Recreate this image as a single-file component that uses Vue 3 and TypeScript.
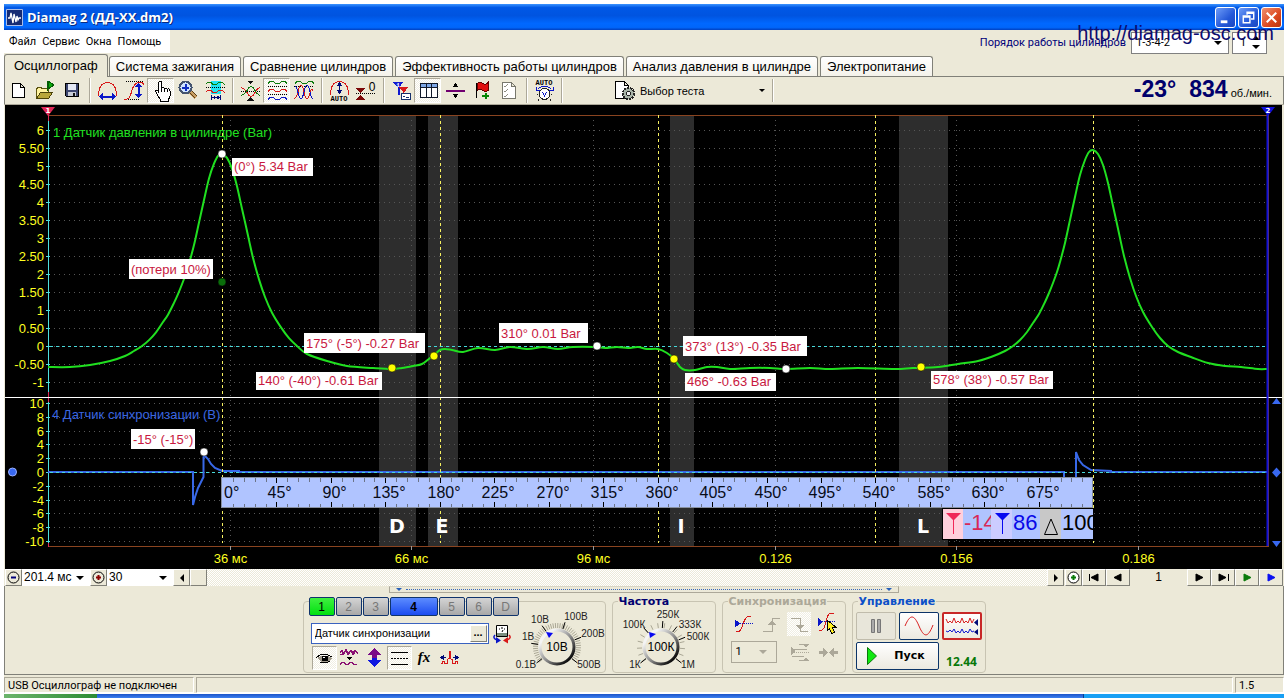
<script setup lang="ts">
import { ref } from 'vue'

type Shape = { d: string; s?: string; f?: string; w?: number; dash?: string }
type Glyph = { t: string; x: number; y: number; c?: string; size: number; thin?: boolean }
type Tool = { label: string; shapes: Shape[]; glyphs?: Glyph[]; on?: boolean }
type Pt = [number, number]

const RED = '#d81818'
const BLUE = '#0a16c8'
const GREEN = '#0b7a0b'
const dots = '1 1'

const tabs = [
  'Осциллограф',
  'Система зажигания',
  'Сравнение цилиндров',
  'Эффективность работы цилиндров',
  'Анализ давления в цилиндре',
  'Электропитание',
]
const activeTab = ref(0)

const toolGroups: Tool[][] = [
  [
    { label: 'Новый', shapes: [{ d: 'M6.5 4.5h8l4 4v10h-12zM14.5 4.5v4h4', s: '#000', f: '#fff' }] },
    {
      label: 'Открыть',
      shapes: [
        { d: 'M3.5 19.5v-10h1v-1h4v1h7v4', s: '#5d5410', f: '#fff3a0' },
        { d: 'M3.5 19.5l4-6h12l-4 6z', s: '#4a4208', f: '#b8a63c' },
        { d: 'M14.5 2v10', s: '#045c04' },
        { d: 'M15 2l6 4-6 4z', f: '#0da80d', s: '#045c04' },
      ],
    },
    {
      label: 'Сохранить',
      shapes: [
        { d: 'M5.5 4.5h13v13h-12l-1-1z', s: '#000', f: '#3c4670' },
        { d: 'M8 5h8v6h-8z', f: '#e4e8f4' },
        { d: 'M8 13h8v4h-8z', f: '#c8ccd8' },
        { d: 'M13 14h2v3h-2z', f: '#111' },
      ],
    },
  ],
  [
    {
      label: 'Растянуть по времени',
      shapes: [
        { d: 'M3.5 16.5v-3c1-6 4-10 9-10s8 4 9 10v3', s: RED },
        { d: 'M6 17.5h13', s: BLUE, w: 2 },
        { d: 'M4 17.5l4-4v8zM21 17.5l-4-4v8z', f: BLUE },
      ],
    },
    {
      label: 'Растянуть по амплитуде',
      shapes: [
        { d: 'M4 2.5h18M2 20.5h15', s: '#000', dash: dots },
        { d: 'M2 20.5c8 0 6-6 9-12 2-4 4-5 6-5h2c2 0 2 1 3 2', s: RED },
        { d: 'M16.5 6v11', s: BLUE, w: 2 },
        { d: 'M16.5 4l-4 4h8zM16.5 19l-4-4h8z', f: BLUE },
      ],
    },
    {
      label: 'Рука',
      on: true,
      shapes: [
        {
          d: 'M9.500 13.500v-9.500q0-1.500 1.500-1.500t1.500 1.500v5.500q.5-1 1.500-1t1.500 1.500q.5-1 1.500-1t1.500 1.500q.5-.7 1.500-.5t1 1.500v5q0 2-1.500 4v1.500h-8v-1.500q-2-2-3-5l-2-3q0-1.500 1-1.500t2 1.500z',
          s: '#000',
          f: '#fff',
        },
        { d: 'M12.500 9v4M15.500 10v3M18.500 11v2', s: '#000' },
      ],
    },
    {
      label: 'Лупа',
      shapes: [
        { d: 'M13 12l7 7', s: '#caa064', w: 4 },
        { d: 'M13 13l6 6M15 11l6 6', s: '#5a3c10' },
        { d: 'M9.500 2.500a6 6 0 1 0 .1 0z', s: '#44546e', f: '#cfe4ff', w: 2 },
        { d: 'M9.500 5v7M6 8.500h7', s: '#1030c0', w: 2 },
      ],
    },
    {
      label: 'Диапазон',
      shapes: [
        { d: 'M8 2h10v13h-10z', f: '#20e4f0' },
        { d: 'M3 4.500l2-1h3l2 2h3l3-2h3l3 2', s: GREEN },
        { d: 'M3 8.500h19', s: '#000', dash: dots },
        { d: 'M3 12.500l2-1h3l2 2h3l3-2h3l3 2', s: RED },
        { d: 'M8.500 16v5M17.500 16v5M9 18.500h8', s: '#000a78' },
        { d: 'M9 18.500l3-2v4zM17 18.500l-3-2v4z', f: '#000a78' },
      ],
    },
  ],
  [
    {
      label: 'Совместить',
      shapes: [
        { d: 'M3 12.500h19', s: '#000', dash: dots },
        { d: 'M3 8.500q4 1 6 5t4 4 4-4 5-5', s: RED },
        { d: 'M3 16.500q4-1 6-5t4-4 4 4 5 5', s: GREEN },
        { d: 'M9 1.500h7l-3.500 4zM9 21.500h7l-3.500-4z', f: '#111' },
      ],
    },
    {
      label: 'Разнести сигналы',
      on: true,
      shapes: [
        { d: 'M3 4.500l2-2h3l3 2h3l3-2h3l2 2', s: GREEN },
        { d: 'M3 7.500h19M3 15.500h19', s: '#000', dash: dots },
        { d: 'M3 12.500l2-2h3l3 2h3l3-2h3l2 2', s: RED },
        { d: 'M3 20.500l2-2h3l3 2h3l3-2h3l2 2', s: BLUE },
      ],
    },
    {
      label: 'Наложить сигналы',
      shapes: [
        { d: 'M3 4.500l2-2h3l3 2h3l3-2h3l2 2', s: GREEN },
        { d: 'M2 7.500h20', s: '#000', dash: dots },
        { d: 'M2 19.500c4 0 4-13 7-13s3 13 6 13 3-13 6-8', s: RED },
        { d: 'M3 7.500c3 0 3 12 6 12s3-13 6-13 3 13 6 13', s: BLUE },
      ],
    },
  ],
  [
    {
      label: 'Автомасштаб',
      shapes: [
        { d: 'M3.500 15.500v-3c1-6 4-10 9-10s8 4 9 10v3', s: RED },
        { d: 'M12.500 5v8', s: '#000a78' },
        { d: 'M12.500 3l-3 4h6zM12.500 15l-3-4h6z', f: '#000a78' },
      ],
      glyphs: [{ t: 'AUTO', x: 12, y: 22, size: 7 }],
    },
    {
      label: 'Установить ноль',
      shapes: [
        { d: 'M2 9h9l-4.500 5zM2 21h9l-4.500-5z', f: '#7c0808' },
        { d: 'M2 14.500h20', s: '#000', dash: dots },
      ],
      glyphs: [{ t: '0', x: 18, y: 12, size: 12, thin: true }],
    },
  ],
  [
    {
      label: 'Синхронизация',
      shapes: [
        { d: 'M3.500 2.500h11l-5 7z', f: '#1018d0' },
        { d: 'M9.500 7v9', s: '#1018d0', w: 2 },
        { d: 'M9 7.500h11l-5 6z', f: RED },
        { d: 'M14.500 12v6', s: RED },
        { d: 'M12.500 14.500h9v6h-9zM14 17.500h2M17 18.500h3', s: '#16306c', f: '#fff' },
      ],
      glyphs: [{ t: '1', x: 9, y: 8, c: '#fff', size: 6 }],
    },
    {
      label: 'Таблица',
      on: true,
      shapes: [
        { d: 'M4.500 4.500h17v14h-17z', s: '#101828', f: '#fff' },
        { d: 'M5 5h16v3h-16z', f: '#7da6e4' },
        { d: 'M4 8.500h18M10.500 5v14M15.500 5v14', s: '#101828' },
      ],
    },
    {
      label: 'Горизонтальная линия',
      shapes: [
        { d: 'M3 11.500h19', s: '#700070', w: 2 },
        { d: 'M12.500 4l3 4h-6zM12.500 19l3-4h-6z', f: '#000' },
      ],
    },
    {
      label: 'Добавить метку',
      shapes: [
        { d: 'M6.500 4v15', s: '#000' },
        { d: 'M7 4.500q3-2 6 0t5-1v8q-2 2-5 0t-6 0z', s: '#600', f: '#e01010' },
        { d: 'M12 17h7M15.500 14v6', s: '#068606', w: 2 },
      ],
    },
    {
      label: 'Отчёт',
      shapes: [
        { d: 'M5.500 3.500h9l4 4v12h-13zM14.500 3.500v4h4', s: '#77776c', f: '#fff' },
        { d: 'M7 7l1 1 3-3M7 12l1 1 3-3M7 17l1 1 3-3', s: '#8c8c80' },
      ],
    },
  ],
  [
    {
      label: 'Авто',
      shapes: [
        { d: 'M6 9.500q6-4 13 0M4 8v3h4M21 8v3h-4', s: BLUE },
        { d: 'M12.500 9.500a5.500 5.500 0 1 0 .1 0z', s: '#222', f: '#fff' },
        { d: 'M7 20l-1 2M18 20l1 2M6 15h-1M20 15h-1', s: '#222' },
        { d: 'M10.500 13l2 4 2-4', s: BLUE },
      ],
      glyphs: [{ t: 'AUTO', x: 12, y: 6, size: 7 }],
    },
  ],
]

/* One compression pulse; the trace holds it twice, a cycle apart. */
const pulse: Pt[] = [
  [1005, 351], [1013, 346], [1020, 340], [1027, 332], [1033, 323], [1039, 314], [1045, 302], [1049, 293], [1053, 283],
  [1057, 272], [1060, 262], [1065, 243], [1070, 220], [1075, 197], [1080, 175], [1085, 160], [1089, 152], [1093, 150],
  [1098, 154], [1103, 165], [1108, 183], [1113, 206], [1117, 224], [1120, 238], [1124, 256], [1130, 278], [1136, 296],
  [1143, 312], [1152, 327], [1160, 338], [1168, 346],
]
const cycle = 871
const pressure: Pt[] = [
  [48, 367], [70, 367], [90, 365], [110, 361], [125, 356],
  ...pulse.map(([x, y]): Pt => [x - cycle, y < 346 ? 346 + (y - 346) * 0.98 : y]),
  [307, 354], [327, 361], [347, 366], [373, 368], [392, 369],
  [402, 368], [413, 366], [422, 364], [430, 358], [434, 355], [440, 350], [445, 349], [452, 350], [463, 352],
  [478, 348], [495, 350], [510, 347], [528, 349], [543, 347], [558, 349], [573, 347], [595, 347], [605, 348],
  [617, 347], [628, 348], [638, 347], [647, 349], [658, 349], [667, 353], [674, 359], [680, 367], [685, 370],
  [695, 370], [707, 367], [717, 367], [730, 369], [750, 368], [770, 368], [786, 369], [810, 368], [830, 369],
  [858, 368], [895, 369], [913, 368], [938, 367], [958, 364], [978, 361], [991, 357],
  ...pulse,
  [1178, 352], [1191, 357], [1208, 363], [1225, 366], [1241, 367], [1258, 369], [1267, 369],
]

function smooth(p: Pt[]): string {
  let d = `M${p[0][0]} ${p[0][1]}`
  for (let i = 0; i < p.length - 1; i++) {
    const a = p[Math.max(0, i - 1)]
    const b = p[i]
    const c = p[i + 1]
    const e = p[Math.min(p.length - 1, i + 2)]
    d += `C${b[0] + (c[0] - a[0]) / 6} ${b[1] + (c[1] - a[1]) / 6} ${c[0] - (e[0] - b[0]) / 6} ${c[1] - (e[1] - b[1]) / 6} ${c[0]} ${c[1]}`
  }
  return d
}
const pressurePath = smooth(pressure)

const barTicks = Array.from({ length: 15 }, (_, i) => {
  const v = 6 - i * 0.5
  return { y: 130.5 + i * 18, text: Number.isInteger(v) ? String(v) : v.toFixed(2) }
})
const voltTicks = Array.from({ length: 11 }, (_, i) => ({ y: Math.round(403 + i * 13.8) + 0.5, text: String(10 - i * 2) }))
const timeTicks = [
  { x: 230.5, text: '36 мс' },
  { x: 411.5, text: '66 мс' },
  { x: 593.5, text: '96 мс' },
  { x: 775.5, text: '0.126' },
  { x: 956.5, text: '0.156' },
  { x: 1138.5, text: '0.186' },
]
const strokes = [222.5, 440.5, 658.5, 875.5, 1093.5]
const bands = [
  { x: 379, w: 37, name: 'D', tx: 397 },
  { x: 428, w: 30, name: 'E', tx: 442 },
  { x: 670, w: 24, name: 'I', tx: 681 },
  { x: 899, w: 49, name: 'L', tx: 923 },
]
const ruler = Array.from({ length: 80 }, (_, i) => ({
  x: Math.round(222 + i * 10.89) + 0.5,
  major: i % 5 === 0,
  text: `${i * 9}°`,
}))
const callouts = [
  { x: 232, y: 158, w: 81, h: 18, t: '(0°) 5.34 Bar' },
  { x: 129, y: 259, w: 84, h: 20, t: '(потери 10%)' },
  { x: 304, y: 333, w: 121, h: 20, t: '175° (-5°) -0.27 Bar' },
  { x: 256, y: 372, w: 126, h: 18, t: '140° (-40°) -0.61 Bar' },
  { x: 499, y: 323, w: 89, h: 20, t: '310° 0.01 Bar' },
  { x: 683, y: 336, w: 124, h: 20, t: '373° (13°) -0.35 Bar' },
  { x: 685, y: 373, w: 91, h: 18, t: '466° -0.63 Bar' },
  { x: 931, y: 371, w: 122, h: 18, t: '578° (38°) -0.57 Bar' },
  { x: 131, y: 429, w: 64, h: 20, t: '-15° (-15°)' },
]
const markers = [
  { x: 222, y: 154, c: '#fff' },
  { x: 222, y: 282, c: '#0a6e0a' },
  { x: 392, y: 368, c: '#ff0' },
  { x: 434, y: 356, c: '#ff0' },
  { x: 597, y: 346, c: '#fff' },
  { x: 674, y: 359, c: '#ff0' },
  { x: 786, y: 369, c: '#fff' },
  { x: 921, y: 367, c: '#ff0' },
  { x: 204, y: 452, c: '#fff' },
]

const channels = ['1', '2', '3', '4', '5', '6', 'D']

type Knob = { cx: number; cy: number; width: number; value: string; label: string; marks: { a: number; t: string; x: number; y: number }[] }
const voltKnob: Knob = {
  cx: 43, cy: 41, width: 94, value: '10В', label: 'Чувствительность',
  marks: [
    { a: 218, t: '0.1В', x: 12, y: 62 },
    { a: 172, t: '1В', x: 14, y: 34 },
    { a: 125, t: '10В', x: 26, y: 17 },
    { a: 72, t: '100В', x: 62, y: 14 },
    { a: 22, t: '200В', x: 79, y: 31 },
    { a: -38, t: '500В', x: 75, y: 62 },
  ],
}
const freqKnob: Knob = {
  cx: 48, cy: 41, width: 102, value: '100К', label: 'Частота',
  marks: [
    { a: 218, t: '1К', x: 22, y: 62 },
    { a: 132, t: '100К', x: 21, y: 22 },
    { a: 86, t: '250К', x: 55, y: 12 },
    { a: 52, t: '333К', x: 77, y: 22 },
    { a: 22, t: '500К', x: 85, y: 34 },
    { a: -38, t: '1М', x: 75, y: 62 },
  ],
}
function radial(k: Knob, a: number, r1: number, r2: number): string {
  const r = (a * Math.PI) / 180
  const c = Math.cos(r)
  const s = Math.sin(r)
  return `M${k.cx + c * r1} ${k.cy - s * r1}L${k.cx + c * r2} ${k.cy - s * r2}`
}
const fine = Array.from({ length: 44 }, (_, i) => -38 + i * 6)
const coarse = Array.from({ length: 16 }, (_, i) => -38 + i * 17)

const channelTools: Tool[] = [
  {
    label: 'Показать',
    on: true,
    shapes: [
      { d: 'M5 12q7-5 15 0l-3 4q-5 2-9-1z', f: '#a09a8c' },
      { d: 'M4 12q7-7 16-1M8 16q6 2 10-1', s: '#000' },
      { d: 'M10 10h6v5h-6z', f: '#000' },
      { d: 'M11 11h2v1h-2z', f: '#fff' },
    ],
  },
  {
    label: 'Фильтр',
    shapes: [
      { d: 'M3 7l2-3 1 4 3-5 2 5 3-4 2 3 2-3 3 4M3 8l3 1 3-4 2 4 3-4 2 4 2-3', s: '#8a1072' },
      { d: 'M9 11h6l-3 3z', f: '#000' },
      { d: 'M3 18.500l2-2h2l2 2h2l2-2h2l2 2h3', s: '#8a1072' },
    ],
  },
  {
    label: 'Инверсия',
    shapes: [
      { d: 'M12.500 2l7 7h-4.500v3h-5v-3h-4.500z', f: '#7a0c88' },
      { d: 'M12.500 21l7-7h-4.500v-2h-5v2h-4.500z', f: '#1018e0' },
    ],
  },
  {
    label: 'Линии',
    on: true,
    shapes: [
      { d: 'M4 6.500h17M4 18.500h17', s: '#000' },
      { d: 'M4 12.500h17', s: '#000', dash: '2 1' },
    ],
  },
  { label: 'Функция', shapes: [], glyphs: [{ t: 'fx', x: 12, y: 16, size: 15 }] },
  {
    label: 'Сдвиг',
    shapes: [
      { d: 'M4 17.500h1v-2h2v2h3v-4l2-1v-7h1v7l2 1v4h3v-2h2v2h1', s: RED },
      { d: 'M5 11.500h4M16 11.500h4', s: '#000a78' },
      { d: 'M3 11.500l4-3v6zM22 11.500l-4-3v6z', f: '#000a78' },
    ],
  },
]

const syncTools: Tool[] = [
  {
    label: 'Уровень',
    shapes: [
      { d: 'M5 19.500h2q3 0 5-7t5-8h3', s: RED },
      { d: 'M5 11.500h17', s: BLUE, dash: dots },
      { d: 'M4 7.500v8l5-4z', f: BLUE },
    ],
  },
  {
    label: 'По фронту',
    shapes: [
      { d: 'M4 19.500h9v-13h8', s: '#aca899' },
      { d: 'M9 13l4-5 4 5z', f: '#aca899' },
    ],
  },
  {
    label: 'По спаду',
    on: true,
    shapes: [
      { d: 'M4 6.500h9v13h8', s: '#aca899' },
      { d: 'M9 13l4 5 4-5z', f: '#aca899' },
    ],
  },
  {
    label: 'Ручной захват',
    shapes: [
      { d: 'M4 18.500h2q3 0 5-9t5-8h3', s: RED },
      { d: 'M3 9.500h18', s: BLUE, dash: dots },
      { d: 'M3 6v8l5-4z', f: BLUE },
      { d: 'M12.500 8.500v10l2-2 2 5 3-1-2-5h4z', s: '#000', f: '#ffef20' },
    ],
  },
]
const syncDim: Tool[] = [
  {
    label: 'Уровни',
    shapes: [
      { d: 'M4 9.500h15M4 16.500h12M11 20.500h10M11 4.500h10', s: '#aca899' },
      { d: 'M4 12.500h18', s: '#aca899', dash: dots },
      { d: 'M3 7v8l4-4zM15 4h6l-3 4zM15 21h6l-3-4z', f: '#aca899' },
    ],
  },
  {
    label: 'Сжать',
    shapes: [
      { d: 'M3 12.500h6M16 12.500h6', s: '#aca899', w: 3 },
      { d: 'M7 7v11l5-5.500zM18 7v11l-5-5.500z', f: '#aca899' },
    ],
  },
]

const nav = [
  { label: 'В начало', c: '#000', d: 'M6.500 5v7M15 5v7l-7-3.500z' },
  { label: 'Назад', c: '#000', d: 'M14 5v7l-7-3.500z' },
]
const navRight = [
  { label: 'Вперёд', c: '#000', d: 'M8 5v7l7-3.500z' },
  { label: 'В конец', c: '#000', d: 'M7 5v7l7-3.500zM16.500 5v7' },
  { label: 'Воспроизвести', c: '#0a7a0a', d: 'M8 5v7l7-3.500z' },
  { label: 'Воспроизвести всё', c: '#0a10f0', d: 'M8 5v7l7-3.500z' },
]
</script>

<template>
  <main class="screen">
    <div class="window">
      <header class="title">
        <svg class="logo" width="17" height="17" viewBox="0 0 17 17">
          <path d="M.5.5h16v16h-16z" fill="#152b74" stroke="#a9bce8" />
          <path d="M2 9h2l1-5 2 10 1-9 2 8 1-6 1 4 1-2h2" fill="none" stroke="#fff" stroke-width="1.300" />
        </svg>
        <h1>Diamag 2 (ДД-ХХ.dm2)</h1>
        <div class="caption">
          <button aria-label="Свернуть"><svg viewBox="0 0 20 20"><path d="M5 13h7v3h-7z" fill="#fff" /></svg></button>
          <button aria-label="Восстановить">
            <svg viewBox="0 0 20 20" fill="none" stroke="#fff" stroke-width="1.500"><path d="M8.500 7V4.500h7v7h-3M8 5.500h8" /><path d="M4.500 8.500h7v7h-7zM4 9.500h8" /></svg>
          </button>
          <button class="close" aria-label="Закрыть">
            <svg viewBox="0 0 20 20"><path d="M5 5l10 10M15 5l-10 10" stroke="#fff" stroke-width="2.200" /></svg>
          </button>
        </div>
      </header>
      <a class="site" href="#site">http://diamag-osc.com</a>

      <div class="menubar">
        <nav class="menu">
          <button>Файл</button><button>Сервис</button><button>Окна</button><button>Помощь</button>
        </nav>
        <div class="order">
          <label for="order">Порядок работы цилиндров</label>
          <span class="sel boxed"><select id="order"><option>1-3-4-2</option></select></span>
          <span class="spin"><input aria-label="Первый цилиндр" value="1" /></span>
        </div>
      </div>

      <div class="tabs" role="tablist">
        <button v-for="(t, i) in tabs" :key="t" role="tab" :class="{ active: i === activeTab }" @click="activeTab = i">{{ t }}</button>
      </div>

      <div class="toolbar">
        <div v-for="(g, gi) in toolGroups" :key="gi" class="tools">
          <button v-for="b in g" :key="b.label" class="tool" :class="{ on: b.on }" :aria-label="b.label">
            <svg width="24" height="24" viewBox="0 0 24 24" shape-rendering="crispEdges">
              <path v-for="(s, i) in b.shapes" :key="i" :d="s.d" :stroke="s.s || 'none'" :fill="s.f || 'none'" :stroke-width="s.w || 1" :stroke-dasharray="s.dash" />
              <text v-for="g2 in b.glyphs" :key="g2.t" :x="g2.x" :y="g2.y" :fill="g2.c || '#000'" :font-size="g2.size" class="glyph" :class="{ thin: g2.thin }">{{ g2.t }}</text>
            </svg>
          </button>
        </div>
        <button class="test">
          <svg width="22" height="22" viewBox="0 0 22 22" shape-rendering="crispEdges">
            <path d="M1.500 1.500h9l4 4v13h-13zM10.500 1.500v4h4" fill="#fff" stroke="#000" />
            <circle cx="14.500" cy="13.500" r="5.500" fill="#a8b4a8" stroke="#222" stroke-width="2" stroke-dasharray="2 1" />
            <circle cx="14.500" cy="13.500" r="2" fill="#eee" stroke="#222" />
          </svg>
          <span>Выбор теста</span>
          <i class="caret"></i>
        </button>
        <div class="readout"><b>-23°</b><b>834</b><small>об./мин.</small></div>
      </div>

      <svg class="chart" viewBox="5 105 1277 464">
        <rect x="5" y="105" width="1277" height="464" fill="#000" />
        <g fill="#2d2d2d"><rect v-for="b in bands" :key="b.name" :x="b.x" y="116" :width="b.w" height="430" /></g>
        <g stroke="#565656" stroke-dasharray="1 4" shape-rendering="crispEdges">
          <line v-for="t in barTicks" :key="'b' + t.y" x1="54" x2="1267" :y1="t.y" :y2="t.y" />
          <line v-for="t in voltTicks" :key="'v' + t.y" x1="54" x2="1267" :y1="t.y" :y2="t.y" />
          <line v-for="t in timeTicks" :key="t.x" :x1="t.x" :x2="t.x" y1="120" y2="545" />
        </g>
        <path d="M48 115.500H1268.500V546.500H48" fill="none" stroke="#8a4420" shape-rendering="crispEdges" />
        <g class="axis" text-anchor="end">
          <text v-for="t in barTicks" :key="t.y" x="44" :y="t.y + 4.500">{{ t.text }}</text>
          <text v-for="t in voltTicks" :key="t.y" x="44" :y="t.y + 4.500">{{ t.text }}</text>
        </g>
        <g stroke="#4fe0e0" shape-rendering="crispEdges">
          <path d="M48.500 121V546" stroke-width="1" />
          <line v-for="t in barTicks" :key="t.y" x1="46" x2="50" :y1="t.y" :y2="t.y" />
          <line v-for="t in voltTicks" :key="t.y" x1="46" x2="50" :y1="t.y" :y2="t.y" />
        </g>
        <path d="M48.500 115V121M48.500 392V402M48.500 543V547" stroke="#e02858" />
        <g class="axis" text-anchor="middle">
          <template v-for="t in timeTicks" :key="t.x">
            <text :x="t.x" y="563">{{ t.text }}</text>
            <line :x1="t.x" :x2="t.x" y1="546" y2="550" stroke="#999" />
          </template>
        </g>
        <text x="53" y="137" class="signal" fill="#20e020">1 Датчик давления в цилиндре (Bar)</text>
        <text x="52" y="419" class="signal" fill="#3a66e0">4 Датчик синхронизации (В)</text>
        <path d="M48 472H193V505L195 497 198 488 203.500 477V457L205 456 208 459 211 464 215 468 222 471 240 471M236 472H1064V478M1076 478V452L1079 460 1083 465 1091 470 1112 471M1108 472H1267" fill="none" stroke="#3868e8" stroke-width="2" />
        <g stroke="#48d8d8" stroke-dasharray="3 3" shape-rendering="crispEdges"><path d="M50 346.500H1267M50 472.500H1267" /></g>
        <g stroke="#f6f060" stroke-dasharray="3 3" shape-rendering="crispEdges"><line v-for="x in strokes" :key="x" :x1="x" :x2="x" y1="115" y2="543" /></g>
        <path :d="pressurePath" fill="none" stroke="#20e020" stroke-width="2" />
        <path d="M5 397.500H1282" stroke="#fff" shape-rendering="crispEdges" />
        <path d="M1267.500 112V546" stroke="#1010d8" stroke-width="2" />
        <path d="M41 107H55L48 116Z" fill="#e02858" />
        <text x="48" y="113" class="mini">1</text>
        <path d="M1261 107H1275L1268 116Z" fill="#1010d8" />
        <text x="1268" y="113" class="mini">2</text>
        <circle cx="12.500" cy="472" r="4" fill="#3868f0" stroke="#9ab0ff" />
        <path d="M1276.500 398l4.500 6h-9zM1276.500 467.500l4.500 5-4.500 5-4.500-5zM1276.500 547l4.500-6h-9z" fill="#3868f0" />

        <rect x="221.500" y="477.500" width="871" height="30" fill="#b0c4ff" stroke="#8890a0" />
        <template v-for="t in ruler" :key="t.x">
          <path v-if="t.x > 223" :d="t.major ? `M${t.x} 478v5M${t.x} 502v5` : `M${t.x} 478v4M${t.x} 504v3`" :stroke="t.major ? '#000' : '#6c7488'" shape-rendering="crispEdges" />
          <text v-if="t.major && t.x < 1060" :x="t.x < 223 ? 224 : t.x < 350 ? t.x - 9 : t.x - 13" y="498" class="deg">{{ t.text }}</text>
        </template>
        <text v-for="b in bands" :key="b.name" :x="b.tx" y="533" class="phase">{{ b.name }}</text>

        <g>
          <rect x="942.500" y="508.500" width="151" height="31" fill="#b0c4ff" stroke="#000" />
          <rect x="943" y="509" width="20" height="30" fill="#ffd0dc" />
          <rect x="991" y="509" width="21" height="30" fill="#ccccff" />
          <rect x="1040" y="509" width="21" height="30" fill="#c8c8c8" />
          <path d="M946 513H961L954 520V534H953V520Z" fill="#f02858" />
          <path d="M995 513H1010L1003 520V534H1002V520Z" fill="#0808f0" />
          <path d="M1044.500 534.500L1051 519L1057.500 534.500Z" fill="none" stroke="#000" />
          <svg x="963" y="509" width="28" height="30"><text x="1" y="21" class="cursor" fill="#d82858">-14</text></svg>
          <svg x="1012" y="509" width="28" height="30"><text x="1" y="21" class="cursor" fill="#0808e8">86</text></svg>
          <svg x="1061" y="509" width="33" height="30"><text x="1" y="21" class="cursor" fill="#000">100</text></svg>
        </g>

        <g v-for="c in callouts" :key="c.t">
          <rect :x="c.x" :y="c.y" :width="c.w" :height="c.h" fill="#fff" />
          <text :x="c.x + 2" :y="c.y + c.h - 5" class="note">{{ c.t }}</text>
        </g>
        <circle v-for="m in markers" :key="m.x + '-' + m.y" :cx="m.x" :cy="m.y" r="4" :fill="m.c" stroke="#000" stroke-width=".5" />
      </svg>

      <div class="timebar">
        <button class="raised sq" aria-label="Уменьшить">
          <svg width="13" height="13" viewBox="0 0 13 13"><circle cx="6.500" cy="6.500" r="5.500" fill="none" stroke="#000" /><path d="M4 6.500h5" stroke="#00007a" stroke-width="2" /></svg>
        </button>
        <span class="sel flat w68"><select aria-label="Развёртка"><option>201.4 мс</option></select></span>
        <button class="raised sq" aria-label="Увеличить">
          <svg width="13" height="13" viewBox="0 0 13 13"><circle cx="6.500" cy="6.500" r="5.500" fill="none" stroke="#000" /><path d="M4 6.500h5M6.500 4v5" stroke="#8a0000" stroke-width="2" /></svg>
        </button>
        <span class="sel flat w66"><select aria-label="Шаг"><option>30</option></select></span>
        <button class="raised sq" aria-label="Прокрутить влево"><svg width="8" height="8" viewBox="0 0 8 8"><path d="M6 0v8l-4-4z" /></svg></button>
        <div class="track"><span class="raised thumb"></span></div>
        <button class="raised sq" aria-label="Прокрутить вправо"><svg width="8" height="8" viewBox="0 0 8 8"><path d="M2 0v8l4-4z" /></svg></button>
        <button class="raised sq gap" aria-label="Добавить">
          <svg width="13" height="13" viewBox="0 0 13 13"><circle cx="6.500" cy="6.500" r="5.500" fill="#fff" stroke="#000" /><path d="M4 6.500h5M6.500 4v5" stroke="#087a08" stroke-width="2" /></svg>
        </button>
        <button v-for="n in nav" :key="n.label" class="raised nav" :aria-label="n.label">
          <svg width="22" height="17" viewBox="0 0 22 17"><path :d="n.d" :fill="n.c" :stroke="n.c" /></svg>
        </button>
        <output class="frame">1</output>
        <button v-for="n in navRight" :key="n.label" class="raised nav" :aria-label="n.label">
          <svg width="22" height="17" viewBox="0 0 22 17"><path :d="n.d" :fill="n.c" :stroke="n.c" /></svg>
        </button>
      </div>

      <div class="panel">
        <div class="splitter"><i></i><span></span><i></i></div>
        <div class="groups">
          <section class="group channel">
            <div class="left">
              <div class="chans">
                <button v-for="c in channels" :key="c" :class="{ green: c === '1', blue: c === '4' }">{{ c }}</button>
              </div>
              <div class="row">
                <span class="name"><input aria-label="Датчик" value="Датчик синхронизации" /><button class="raised" aria-label="Выбрать">...</button></span>
                <button class="tool" aria-label="Поменять прибор">
                  <svg width="20" height="20" viewBox="0 0 20 20">
                    <path d="M4.500 1.500h11v11h-11z" fill="#fff" stroke="#000" /><path d="M5 9h10v3h-10z" fill="#7c9080" />
                    <path d="M7 5h1M9 4h2M12 5h1M10 8l1-2" fill="none" stroke="#000" />
                    <path d="M3 11q-3 3 2 5" fill="none" stroke="#0a16c8" stroke-width="1.500" /><path d="M4 13l5 3.500-5 3z" fill="#0a16c8" />
                    <path d="M17 11q3 3-2 5" fill="none" stroke="#d81818" stroke-width="1.500" /><path d="M16 13l-5 3.500 5 3z" fill="#d81818" />
                  </svg>
                </button>
              </div>
              <div class="row icons">
                <button v-for="b in channelTools" :key="b.label" class="tool" :class="{ on: b.on }" :aria-label="b.label">
                  <svg width="24" height="24" viewBox="0 0 24 24" shape-rendering="crispEdges">
                    <path v-for="(s, i) in b.shapes" :key="i" :d="s.d" :stroke="s.s || 'none'" :fill="s.f || 'none'" :stroke-width="s.w || 1" :stroke-dasharray="s.dash" />
                    <text v-for="g2 in b.glyphs" :key="g2.t" :x="g2.x" :y="g2.y" :font-size="g2.size" class="glyph fx">{{ g2.t }}</text>
                  </svg>
                </button>
              </div>
            </div>
            <button class="knob" :aria-label="voltKnob.label">
              <svg :width="voltKnob.width" height="70" :viewBox="`0 0 ${voltKnob.width} 70`">
                <defs><linearGradient id="rim" x1="0" y1="0" x2="1" y2="1"><stop offset="0.200" stop-color="#f4f4f4" /><stop offset="0.550" stop-color="#888" /><stop offset="0.900" stop-color="#000" /></linearGradient></defs>
                <path v-for="a in fine" :key="'f' + a" :d="radial(voltKnob, a, 19, 24)" stroke="#aaa795" />
                <path v-for="m in voltKnob.marks" :key="m.t" :d="radial(voltKnob, m.a, 19, 26)" stroke="#000" />
                <circle :cx="voltKnob.cx" :cy="voltKnob.cy" r="17" fill="#ece9d8" stroke="url(#rim)" stroke-width="3" />
                <path d="M32 26l7 1-4 5z" fill="#0808f0" />
                <text :x="voltKnob.cx" :y="voltKnob.cy + 4" class="kv">{{ voltKnob.value }}</text>
                <text v-for="m in voltKnob.marks" :key="'t' + m.t" :x="m.x" :y="m.y" class="km">{{ m.t }}</text>
              </svg>
            </button>
          </section>

          <section class="group freq">
            <h2>Частота</h2>
            <button class="knob" :aria-label="freqKnob.label">
              <svg :width="freqKnob.width" height="70" :viewBox="`0 0 ${freqKnob.width} 70`">
                <path v-for="a in coarse" :key="'f' + a" :d="radial(freqKnob, a, 19, 24)" stroke="#aaa795" />
                <path v-for="m in freqKnob.marks" :key="m.t" :d="radial(freqKnob, m.a, 19, 26)" stroke="#000" />
                <circle :cx="freqKnob.cx" :cy="freqKnob.cy" r="17" fill="#ece9d8" stroke="url(#rim)" stroke-width="3" />
                <path d="M36 26l7 2-6 4z" fill="#0808f0" />
                <text :x="freqKnob.cx" :y="freqKnob.cy + 4" class="kv">{{ freqKnob.value }}</text>
                <text v-for="m in freqKnob.marks" :key="'t' + m.t" :x="m.x" :y="m.y" class="km">{{ m.t }}</text>
              </svg>
            </button>
          </section>

          <section class="group sync">
            <h2>Синхронизация</h2>
            <div class="row">
              <button v-for="b in syncTools" :key="b.label" class="tool" :class="{ hatch: b.on }" :aria-label="b.label">
                <svg width="24" height="24" viewBox="0 0 24 24" shape-rendering="crispEdges">
                  <path v-for="(s, i) in b.shapes" :key="i" :d="s.d" :stroke="s.s || 'none'" :fill="s.f || 'none'" :stroke-width="s.w || 1" :stroke-dasharray="s.dash" />
                </svg>
              </button>
            </div>
            <div class="row second">
              <span class="sel dim"><select aria-label="Канал синхронизации"><option>1</option></select></span>
              <button v-for="b in syncDim" :key="b.label" class="tool" :aria-label="b.label">
                <svg width="24" height="24" viewBox="0 0 24 24" shape-rendering="crispEdges">
                  <path v-for="(s, i) in b.shapes" :key="i" :d="s.d" :stroke="s.s || 'none'" :fill="s.f || 'none'" :stroke-width="s.w || 1" :stroke-dasharray="s.dash" />
                </svg>
              </button>
            </div>
          </section>

          <section class="group control">
            <h2>Управление</h2>
            <div class="grid">
              <button class="pause" aria-label="Пауза">
                <svg width="36" height="24" viewBox="0 0 36 24"><path d="M13.500 5.500h3v13h-3zM19.500 5.500h3v13h-3z" fill="#aaa" stroke="#777" /></svg>
              </button>
              <button class="navy" aria-label="Осциллограмма">
                <svg width="36" height="24" viewBox="0 0 36 24"><path d="M4 12C9 0 13 0 18 12S27 24 32 11" fill="none" stroke="#d82020" /></svg>
              </button>
              <button class="red" aria-label="Запись">
                <svg width="36" height="24" viewBox="0 0 36 24" fill="none">
                  <path d="M2 5l2 4 2-2 2 2 2-5 2 5 2-2 2 2 2-5 2 5 2-2 2 2 2-5 2 5 2-4" stroke="#d82020" />
                  <path d="M2 17l2 1 2-2 2 2 2-3 2 4 2-2 2 2 2-4 2 4 2-2 2 2 2-4 2 3 2-1" stroke="#1018d0" />
                  <path d="M34 5v7l-4-3.500zM34 15v6l-4-3z" fill="#000a78" />
                </svg>
              </button>
              <button class="navy start">
                <svg width="12" height="20" viewBox="0 0 12 20"><path d="M1.500 1.500v17l9-8.500z" fill="#10e810" stroke="#0a7a0a" /></svg>
                <span>Пуск</span>
              </button>
              <output>12.44</output>
            </div>
          </section>
        </div>
      </div>

      <footer class="status">
        <span class="s1">USB Осциллограф не подключен</span><span class="s2"></span><span class="s3">1.5</span>
      </footer>
      <div class="taskbar"><i class="begin"></i><i class="mid"></i><i class="tray"></i></div>
    </div>
  </main>
</template>

<style>
body { margin: 0; background: #fff; }
</style>

<style scoped>
* { box-sizing: border-box; }
.screen { padding: 4px 4px 0; min-height: 100vh; overflow: hidden; font: 11px/14px Roboto, "Noto Sans", sans-serif; color: #000; }
.window { position: relative; background: #ece9d8; }
button { font: inherit; color: inherit; border: 0; padding: 0; background: none; }
select, input { font: inherit; color: inherit; border: 0; padding: 0; background: none; border-radius: 0; outline: 0; }
svg { display: block; }

.title { display: flex; align-items: center; height: 26px; padding: 0 2px 0 2px; background: linear-gradient(#3c94ff 0, #0058e6 14%, #0054e0 45%, #0068ff 75%, #0066fa 90%, #0040c0); }
.title h1 { margin: 0 auto 0 4px; color: #fff; font: bold 13px/20px "Open Sans", "Noto Sans", sans-serif; text-shadow: 1px 1px #0a2a80; }
.caption { display: flex; gap: 2px; }
.caption button { width: 21px; height: 21px; border: 1px solid #fff; border-radius: 3px; background: linear-gradient(135deg, #6e9cf8, #2458d8 60%, #1c48c0); }
.caption button.close { background: linear-gradient(135deg, #f09070, #dc4820 60%, #b83410); }
.site { position: absolute; right: 10px; top: 17px; font: 20px/24px "Liberation Sans", Arial, sans-serif; color: #0c0c70; text-decoration: none; z-index: 2; }

.menubar { display: flex; justify-content: space-between; height: 24px; }
.menu { display: flex; align-items: center; gap: 6px; width: 166px; height: 23px; padding-left: 5px; background: #fff; white-space: nowrap; }
.order { display: flex; align-items: center; padding: 1px 17px 0 0; color: #000078; }
.order label { margin-right: 5px; }
.order input, .order select { color: #000; }
.sel { position: relative; display: block; background: #fff; }
.sel select { width: 100%; height: 100%; appearance: none; display: block; }
.sel::after { content: ""; position: absolute; right: 6px; top: calc(50% - 2px); border: 4px solid transparent; border-top-color: #000; border-bottom: 0; pointer-events: none; }
.boxed { width: 98px; height: 22px; border: 1px solid #808080; padding-left: 4px; }
.spin { position: relative; width: 35px; height: 22px; margin-left: 3px; border: 1px solid #808080; background: #fff; }
.spin input { width: 20px; height: 20px; padding-left: 7px; display: block; }
.spin::before, .spin::after { content: ""; position: absolute; right: 6px; border: 4px solid transparent; }
.spin::before { top: 3px; border-bottom-color: #000; border-top: 0; }
.spin::after { bottom: 4px; border-top-color: #000; border-bottom: 0; }

.tabs { display: flex; align-items: flex-end; height: 23px; gap: 2px; border-bottom: 1px solid #808078; }
.tabs button { height: 20px; padding: 0 6px; border: 1px solid #808078; border-bottom: 0; border-radius: 3px 3px 0 0; background: linear-gradient(#fff, #f4f2ea); font: 13px/18px "Liberation Sans", Arial, sans-serif; white-space: nowrap; }
.tabs button.active { height: 23px; margin: 0 -1px -1px 0; padding: 0 9px; background: #ece9d8; }

.toolbar { display: flex; align-items: center; height: 28px; box-shadow: inset 1px 0 #808078, inset -1px 0 #808078; border-bottom: 1px solid #aca899; }
.tools { display: flex; padding-right: 4px; margin-right: 3px; border-right: 1px solid #aca899; box-shadow: 1px 0 #fff; }
.tool { display: flex; align-items: center; justify-content: center; width: 27px; height: 25px; border: 1px solid transparent; }
.tool svg { flex: none; }
.tool.on, .hatch { background: repeating-conic-gradient(#fff 0 25%, #f0eee2 0 50%) 0 0 / 2px 2px; }
.tool.on { border-color: #aca899 #fff #fff #aca899; }
.glyph { font-family: "Liberation Mono", monospace; font-weight: bold; text-anchor: middle; }
.thin { font-weight: normal; font-family: "Liberation Sans", sans-serif; }
.fx { font-family: "Liberation Serif", serif; font-style: italic; }
.test { display: flex; align-items: center; width: 159px; height: 23px; margin-left: 49px; font: 11px/16px "Liberation Sans", Arial, sans-serif; gap: 4px; border-right: 1px solid #aca899; box-shadow: 1px 0 #fff; }
.caret { margin: 0 7px 0 auto; border: 3px solid transparent; border-top-color: #000; border-bottom: 0; }
.readout { display: flex; align-items: baseline; gap: 3px; margin: 0 12px 0 auto; font: 12px/24px "Liberation Sans", Arial, sans-serif; white-space: nowrap; }
.readout b { font-size: 23px; color: #00006c; }
.readout b:first-child { margin-right: 10px; }
.readout small { font-size: 11px; }

.chart { width: calc(100% - 3px); height: auto; margin-left: 1px; font-family: "Liberation Sans", Arial, sans-serif; }
.axis text { font-size: 13px; fill: #ffff20; }
.signal { font-size: 13px; }
.note { font-size: 13px; fill: #c81840; }
.deg { font-size: 16px; fill: #080c18; }
.phase { font: bold 19px "DejaVu Sans", sans-serif; fill: #fff; text-anchor: middle; }
.cursor { font-size: 22px; }
.mini { font: bold 7px "DejaVu Sans", sans-serif; fill: #fff; text-anchor: middle; }

.timebar { display: flex; height: 17px; padding: 0 1px; font: 12px/17px "Liberation Sans", Arial, sans-serif; }
.raised { display: flex; align-items: center; justify-content: center; border: 1px solid; border-color: #fff #808078 #808078 #fff; background: #ece9d8; }
.sq { width: 17px; height: 17px; flex: none; }
.flat { padding-left: 2px; }
.w68 { width: 68px; }
.w66 { width: 66px; }
.track { flex: 1; background: repeating-conic-gradient(#fff 0 25%, #ece9d8 0 50%) 0 0 / 2px 2px; }
.thumb { width: 17px; height: 17px; }
.gap { margin-left: 1px; }
.nav { width: 24px; flex: none; }
.frame { flex: none; width: 57px; text-align: center; }

.panel { padding: 0 1px; border-left: 1px solid #808078; border-right: 1px solid #808078; border-bottom: 1px solid #808078; height: 89px; }
.splitter { display: flex; align-items: center; justify-content: space-between; gap: 4px; width: 510px; max-width: 100%; height: 7px; margin: 0 auto; padding: 0 6px; border: 1px solid #aca899; border-top-color: #d8d4c4; }
.splitter span { flex: 1; border-top: 1px dotted #3a68b8; }
.splitter i { border: 3px solid transparent; border-top-color: #2860b8; border-bottom: 0; }
.groups { display: flex; justify-content: center; gap: 6px; padding-top: 8px; }
.group { height: 72px; border: 1px solid #c8c4b2; border-radius: 4px; }
.group h2 { width: max-content; margin: -7px 0 0 5px; padding: 0 1px; background: #ece9d8; font: bold 11px/14px "DejaVu Sans", sans-serif; color: #000070; }
.channel { display: flex; width: 303px; }
.left { flex: none; width: 217px; margin-top: -5px; padding-left: 5px; }
.chans { display: flex; gap: 1px; }
.chans button { flex: none; width: 26px; height: 19px; border: 1px solid #10346c; border-radius: 2px; background: linear-gradient(#d4d4d4, #a8a8a8); font: 12px/16px "Liberation Sans", Arial, sans-serif; color: #777; }
.chans button.green { background: linear-gradient(#40f040, #00e010); color: #000; }
.chans button.blue { width: 48px; background: linear-gradient(#5c8cff, #1c4cf0); color: #000; font-weight: bold; }
.row { display: flex; align-items: center; }
.left .row { margin-top: 5px; }
.name { display: flex; width: 178px; height: 21px; margin-left: 2px; border: 1px solid #3a62c0; background: #fff; }
.name input { flex: 1; min-width: 0; padding-left: 3px; font: 11px/19px "Liberation Sans", Arial, sans-serif; }
.name button { width: 17px; height: 17px; margin: 1px; font: bold 11px/8px "Liberation Sans", Arial, sans-serif; padding-bottom: 4px; }
.left .icons { margin: 0 0 0 3px; }
.icons .tool { width: 25px; height: 24px; }
.knob { display: block; }
.channel .knob { margin-left: -7px; height: 70px; }
.channel .knob svg { margin-top: 4px; overflow: visible; }
.kv { font: 12px "Liberation Sans", Arial, sans-serif; text-anchor: middle; }
.km { font: 10px "Liberation Sans", Arial, sans-serif; text-anchor: middle; fill: #222; }
.freq { width: 104px; }
.freq .knob { margin-top: -3px; }
.freq .knob svg { overflow: visible; }
.sync { width: 124px; }
.sync h2 { color: #aca899; }
.sync .row { margin: 3px 0 0 8px; gap: 4px; }
.sync .tool { width: 24px; height: 24px; }
.sync .second { margin-top: 4px; }
.dim { width: 46px; height: 22px; margin-right: 7px; border: 1px solid #aca899; padding-left: 4px; background: #ece9d8; }
.dim::after { right: 9px; border-top-color: #aca899; }
.control { width: 134px; }
.control h2 { color: #0c50c8; }
.grid { display: grid; grid-template-columns: repeat(3, 40px); gap: 2px 3px; margin: 3px 0 0 3px; }
.grid button { display: flex; align-items: center; justify-content: center; height: 28px; border-radius: 2px; background: linear-gradient(#fff, #ece9e0); }
.grid .pause { border: 1px solid #c0bcac; background: #e8e6da; }
.grid .navy { border: 1px solid #0c3468; }
.grid .red { border: 2px solid #c82828; }
.grid .start { grid-column: span 2; justify-content: flex-start; padding-left: 9px; }
.start span { flex: 1; padding-left: 4px; text-align: center; font: bold 11px/16px "DejaVu Sans", sans-serif; }
.grid output { padding-top: 12px; text-align: center; font: bold 12px/16px "Noto Sans", sans-serif; color: #087808; }

.status { display: flex; gap: 2px; height: 18px; padding-top: 2px; }
.status span { height: 16px; border: 1px solid; border-color: #aca899 #fff #fff #aca899; padding-left: 3px; line-height: 15px; white-space: nowrap; }
.s1 { width: 190px; }
.s2 { flex: 1; }
.s3 { width: 49px; }
.taskbar { display: flex; height: 5px; background: #3a7cf0; border-top: 1px solid #fff; }
.taskbar .begin { width: 93px; background: linear-gradient(90deg, #6cb46c, #2c8c34); }
.taskbar .mid { flex: 1; background: linear-gradient(#1c54c8, #3c80f0); }
.taskbar .tray { width: 201px; background: #18a0f4; border-left: 1px solid #0c3c90; }
</style>
